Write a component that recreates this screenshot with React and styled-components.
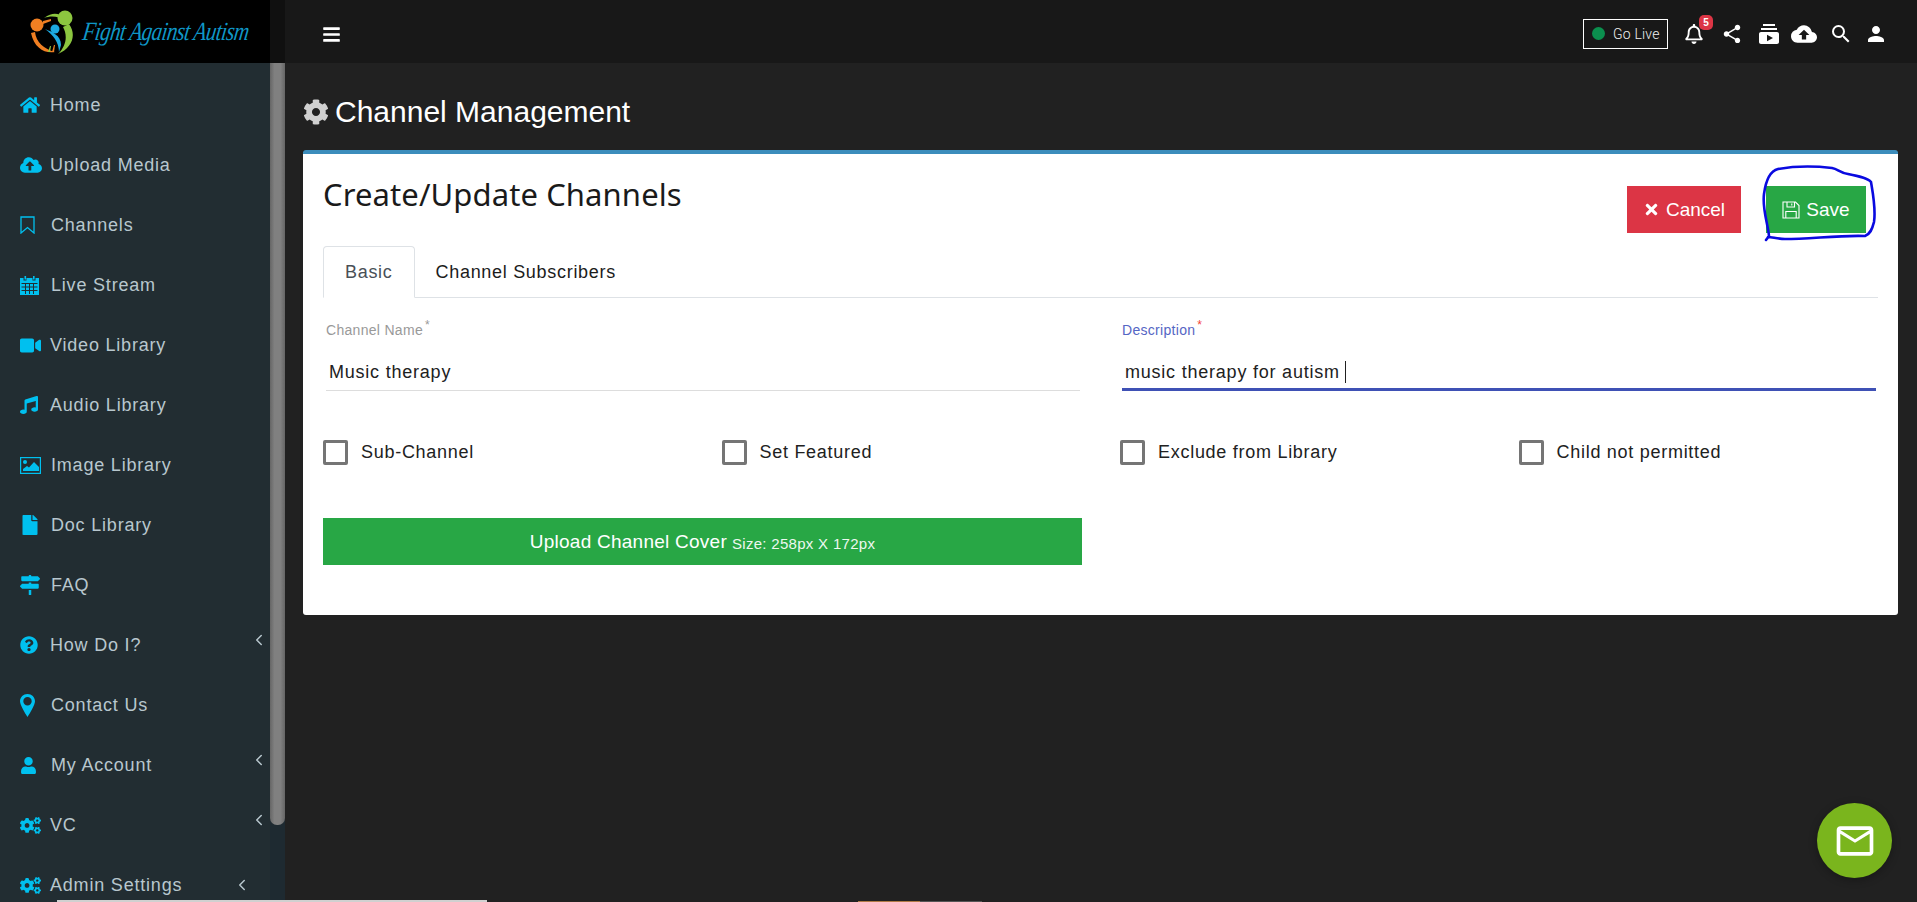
import React from "react";
import styled, { createGlobalStyle } from "styled-components";
import {
  FaHome,
  FaCloudUploadAlt,
  FaVideo,
  FaMusic,
  FaFile,
  FaMapSigns,
  FaQuestionCircle,
  FaUser,
  FaCogs,
  FaCog,
  FaTimes,
  FaBars,
  FaRegBell,
} from "react-icons/fa";
import { FiChevronLeft } from "react-icons/fi";
import {
  MdShare,
  MdSubscriptions,
  MdCloudUpload,
  MdSearch,
  MdPerson,
  MdMailOutline,
} from "react-icons/md";

const GlobalStyle = createGlobalStyle`
  html, body {
    margin: 0;
    padding: 0;
    height: 100%;
    overflow: hidden;
    background: #212121;
    font-family: "Liberation Sans", Arial, sans-serif;
  }
  * { box-sizing: border-box; }
`;

const Page = styled.div`
  position: relative;
  width: 1917px;
  height: 902px;
  display: flex;
  overflow: hidden;
  background: #212121;
`;

const Side = styled.aside`
  width: 285px;
  height: 902px;
  flex-shrink: 0;
  display: flex;
  flex-direction: column;
`;
const LogoBar = styled.div`
  height: 63px;
  flex-shrink: 0;
  display: flex;
  align-items: center;
  padding-left: 30px;
  gap: 7px;
  background: linear-gradient(to right, #000 270px, #101010 270px);
`;
const LogoText = styled.span`
  font-family: "Liberation Serif", serif;
  font-style: italic;
  font-size: 21px;
  color: #0f97c7;
  white-space: nowrap;
  letter-spacing: -0.6px;
  transform: skewX(-8deg) scaleY(1.25);
`;
const SideBody = styled.div`
  flex: 1;
  display: flex;
  min-height: 0;
`;
const Menu = styled.nav`
  width: 270px;
  flex-shrink: 0;
  background: #222d32;
  padding-top: 12px;
  overflow: hidden;
`;
const MenuRow = styled.div`
  height: 60px;
  display: flex;
  align-items: center;
  padding-left: 20px;
  color: #b8c7ce;
  font-size: 18px;
  letter-spacing: 0.8px;
  white-space: nowrap;
`;
const MenuIcon = styled.span`
  width: ${(p) => p.$w}px;
  flex-shrink: 0;
  display: flex;
  align-items: center;
  color: #00c0ef;
  font-size: ${(p) => p.$size || 20}px;
`;
const MenuArrow = styled.span`
  margin-left: ${(p) => (p.$inner ? "51px" : "auto")};
  padding-right: ${(p) => (p.$inner ? "0" : "2px")};
  padding-bottom: ${(p) => (p.$inner ? "0" : "10px")};
  display: flex;
  color: #b8c7ce;
  font-size: 18px;
`;
const Track = styled.div`
  width: 15px;
  flex-shrink: 0;
  background: #1e2a31;
`;
const Thumb = styled.div`
  height: 762px;
  border-radius: 0 0 7px 7px;
  background: linear-gradient(to right, #666 0, #808080 30%, #808080 70%, #666 100%);
`;
const HScroll = styled.div`
  position: absolute;
  left: 57px;
  bottom: 0;
  width: 430px;
  height: 2px;
  background: #d0d0d0;
`;
const TaskMark = styled.div`
  position: absolute;
  left: ${(p) => p.$x}px;
  bottom: 0;
  width: 62px;
  height: 1px;
  background: ${(p) => p.$bg};
`;

const Main = styled.main`
  flex: 1;
  min-width: 0;
  display: flex;
  flex-direction: column;
`;
const TopBar = styled.header`
  height: 63px;
  flex-shrink: 0;
  display: flex;
  align-items: center;
  padding: 0 29px 0 37px;
  background: #181818;
  color: #fff;
`;
const Burger = styled.span`
  display: flex;
  font-size: 19px;
  margin-top: 5px;
`;
const TopRight = styled.div`
  margin-left: auto;
  display: flex;
  align-items: center;
  margin-top: 4px;
`;
const GoLive = styled.div`
  width: 85px;
  height: 30px;
  display: flex;
  align-items: center;
  gap: 8px;
  padding-left: 8px;
  border: 1px solid #fff;
  font-family: "Roboto", "Liberation Sans", sans-serif;
  font-size: 14px;
  font-weight: 300;
  letter-spacing: 0.2px;
  color: #f0f0f0;
  margin-right: 16px;
  white-space: nowrap;
`;
const Dot = styled.i`
  width: 13px;
  height: 13px;
  flex-shrink: 0;
  border-radius: 50%;
  background: #0b8f4e;
`;
const TopIcon = styled.span`
  position: relative;
  display: flex;
  font-size: ${(p) => p.$size || 24}px;
  margin-left: ${(p) => p.$gap || 0}px;
`;
const Badge = styled.b`
  position: absolute;
  top: -9px;
  right: -9px;
  width: 14px;
  height: 15px;
  border-radius: 5px;
  background: #dc3545;
  color: #fff;
  font-size: 10px;
  line-height: 15px;
  text-align: center;
`;

const Content = styled.div`
  padding: 0 19px 0 18px;
`;
const PageTitle = styled.h1`
  margin: 0;
  height: 87px;
  display: flex;
  align-items: center;
  gap: 6px;
  color: #fff;
  font-size: 30px;
  font-weight: 400;
  padding-top: 10px;
  svg {
    color: #d0d0d0;
    font-size: 26px;
  }
`;
const Card = styled.section`
  position: relative;
  height: 465px;
  background: #fff;
  border-top: 4px solid #3c8dbc;
  border-radius: 3px;
  padding: 0 20px;
`;
const CardHead = styled.div`
  display: flex;
  justify-content: space-between;
`;
const CardTitle = styled.h2`
  margin: 0;
  padding-top: 19px;
  font-family: "Noto Sans", sans-serif;
  font-size: 31px;
  line-height: 42px;
  font-weight: 400;
  letter-spacing: 0.1px;
  color: #1a1a1a;
`;
const Actions = styled.div`
  display: flex;
  gap: 25px;
  padding: 32px 12px 0 0;
`;
const Btn = styled.button`
  width: ${(p) => p.$w}px;
  height: 47px;
  display: flex;
  align-items: center;
  justify-content: center;
  gap: 6px;
  border: 0;
  padding: 0;
  background: ${(p) => p.$bg};
  color: #fff;
  font-family: inherit;
  font-size: 19px;
`;
const Tabs = styled.div`
  display: flex;
  height: 52px;
  margin-top: 13px;
  border-bottom: 1px solid #dee2e6;
`;
const Tab = styled.div`
  height: 52px;
  padding: 0 21px;
  margin-left: ${(p) => (p.$active ? "0" : "-1px")};
  display: flex;
  align-items: center;
  font-size: 18px;
  letter-spacing: 0.7px;
  color: ${(p) => (p.$active ? "#495057" : "#1c1c1c")};
  border: 1px solid ${(p) => (p.$active ? "#dee2e6" : "transparent")};
  border-bottom: ${(p) => (p.$active ? "1px solid #fff" : "0")};
  border-radius: 4px 4px 0 0;
`;
const Fields = styled.div`
  display: grid;
  grid-template-columns: 754px 754px;
  column-gap: 42px;
  padding: 23px 0 0 3px;
`;
const Field = styled.div`
  display: flex;
  flex-direction: column;
`;
const Label = styled.label`
  font-size: 14px;
  line-height: 18px;
  letter-spacing: 0.3px;
  color: ${(p) => (p.$focus ? "#5566c4" : "#999")};
  sup {
    font-size: 12px;
    line-height: 0;
    color: ${(p) => (p.$focus ? "#f44336" : "#999")};
    margin-left: 2px;
  }
`;
const ValueLine = styled.div`
  height: 52px;
  display: flex;
  align-items: center;
  padding: ${(p) => (p.$focus ? "17px" : "15px")} 3px 0;
  font-size: 18px;
  letter-spacing: 0.78px;
  color: #212121;
  border-bottom: ${(p) => (p.$focus ? "3px solid #3f51b5" : "1px solid #ddd")};
`;
const Caret = styled.i`
  width: 1px;
  height: 22px;
  margin-left: 5px;
  background: #212121;
`;
const Checks = styled.div`
  display: grid;
  grid-template-columns: repeat(4, 398.5px);
  padding-top: 49px;
`;
const CheckItem = styled.label`
  display: flex;
  align-items: center;
  gap: 13px;
  font-size: 18px;
  letter-spacing: 0.72px;
  color: #212121;
`;
const Box = styled.i`
  width: 25px;
  height: 25px;
  border: 3px solid #757575;
  border-radius: 2px;
`;
const UploadBar = styled.div`
  width: 759px;
  height: 47px;
  margin-top: 53px;
  display: flex;
  align-items: center;
  justify-content: center;
  gap: 5px;
  background: #28a745;
  color: #fff;
  font-size: 19px;
  letter-spacing: 0.25px;
  small {
    font-size: 15px;
    letter-spacing: 0.3px;
    padding-top: 3px;
    opacity: 0.92;
  }
`;
const Scribble = styled.svg`
  position: absolute;
  left: 1760px;
  top: 164px;
  pointer-events: none;
`;
const Fab = styled.div`
  position: absolute;
  left: 1817px;
  top: 803px;
  width: 75px;
  height: 75px;
  border-radius: 50%;
  display: flex;
  align-items: center;
  justify-content: center;
  background: #7ab51d;
  color: #fff;
  font-size: 44px;
  box-shadow: 0 2px 8px rgba(0, 0, 0, 0.3);
`;

const BookmarkIcon = () => (
  <svg width="15" height="18" viewBox="0 0 15 18" fill="none" stroke="currentColor" strokeWidth="1.3">
    <path d="M1 1h13v16l-6.5-5.5L1 17z" />
  </svg>
);
const CalendarIcon = () => (
  <svg width="19" height="20" viewBox="0 0 19 20" fill="currentColor">
    <path d="M0 3h3.5v2.5h3V3h6v2.5h3V3H19v17H0zM4.5 1h1.6v3.5H4.5zM13 1h1.6v3.5H13z" />
    <path
      d="M1.5 8.5h16M1.5 12h16M1.5 15.5h16M5.5 8v11M9.5 8v11M13.5 8v11"
      stroke="#222d32"
      strokeWidth="1"
      fill="none"
    />
  </svg>
);
const ImageIcon = () => (
  <svg width="21" height="17" viewBox="0 0 21 17" fill="none">
    <rect x="0.6" y="0.6" width="19.8" height="15.8" stroke="currentColor" strokeWidth="1.2" />
    <circle cx="5" cy="5" r="2" fill="currentColor" />
    <path d="M3 14v-2l4-3 2 1.5L14 5l5 5v4z" fill="currentColor" />
  </svg>
);
const PinIcon = () => (
  <svg width="15" height="23" viewBox="0 0 15 23" fill="currentColor">
    <path
      fillRule="evenodd"
      d="M7.5 0C3.3 0 0 3.2 0 7.3c0 3.8 5 11.8 7.5 15.7C10 19.1 15 11.1 15 7.3 15 3.2 11.7 0 7.5 0zm0 3a4.2 4.2 0 1 1 0 8.4 4.2 4.2 0 0 1 0-8.4z"
    />
  </svg>
);
const FloppyIcon = () => (
  <svg width="18" height="18" viewBox="0 0 18 18" fill="none" stroke="currentColor" strokeWidth="1.1">
    <path d="M1 1h12.5L17 4.5V17H1z" />
    <path d="M5 1v5h7.5V1M9.8 2.5v2M3.8 17v-6.5h10.4V17" />
  </svg>
);

const menuItems = [
  { label: "Home", icon: <FaHome />, w: 30 },
  { label: "Upload Media", icon: <FaCloudUploadAlt />, w: 30, size: 22 },
  { label: "Channels", icon: <BookmarkIcon />, w: 31 },
  { label: "Live Stream", icon: <CalendarIcon />, w: 31 },
  { label: "Video Library", icon: <FaVideo />, w: 30, size: 21 },
  { label: "Audio Library", icon: <FaMusic />, w: 30, size: 18 },
  { label: "Image Library", icon: <ImageIcon />, w: 31 },
  { label: "Doc Library", icon: <FaFile />, w: 31 },
  { label: "FAQ", icon: <FaMapSigns />, w: 31 },
  { label: "How Do I?", icon: <FaQuestionCircle />, w: 30, size: 18, arrow: true },
  { label: "Contact Us", icon: <PinIcon />, w: 31 },
  { label: "My Account", icon: <FaUser />, w: 31, size: 17, arrow: true },
  { label: "VC", icon: <FaCogs />, w: 30, size: 21, arrow: true },
  { label: "Admin Settings", icon: <FaCogs />, w: 30, size: 21, inner: true },
];

const checks = ["Sub-Channel", "Set Featured", "Exclude from Library", "Child not permitted"];

const Logo = () => (
  <svg width="46" height="46" viewBox="0 0 46 46">
    <circle cx="35" cy="9" r="7.5" fill="#8cc63f" />
    <path d="M14 9 C21 4 26 4 30 6 L29 8.5 C24 7 19 7 14 9Z" fill="#8cc63f" />
    <path d="M39 15 C47 26 42 39 28 45 C36 37 38 27 33 18Z" fill="#8cc63f" />
    <circle cx="7" cy="16" r="6.5" fill="#f07f22" />
    <path d="M13 12 L21 10 L21 12 L13 15Z" fill="#f07f22" />
    <path d="M5 23 C6 33 14 40 25 43 C15 45 4 39 1 24Z" fill="#f07f22" />
    <circle cx="25" cy="20" r="4.5" fill="#1ca9e0" />
    <path d="M15 20 C22 23 31 26 31 36 L29 43 C29 33 23 26 15 20Z" fill="#1ca9e0" />
    <path d="M18 43 L20 37 L21 37 L20 43Z" fill="#8cc63f" />
    <path d="M22 43 L24 36 L25 36 L24 43Z" fill="#f07f22" />
  </svg>
);

const App = () => (
  <Page>
    <GlobalStyle />
    <Side>
      <LogoBar>
        <Logo />
        <LogoText>Fight Against Autism</LogoText>
      </LogoBar>
      <SideBody>
        <Menu>
          {menuItems.map((item) => (
            <MenuRow key={item.label}>
              <MenuIcon $w={item.w} $size={item.size}>
                {item.icon}
              </MenuIcon>
              {item.label}
              {item.arrow && (
                <MenuArrow>
                  <FiChevronLeft />
                </MenuArrow>
              )}
              {item.inner && (
                <MenuArrow $inner>
                  <FiChevronLeft />
                </MenuArrow>
              )}
            </MenuRow>
          ))}
        </Menu>
        <Track>
          <Thumb />
        </Track>
      </SideBody>
    </Side>

    <Main>
      <TopBar>
        <Burger>
          <FaBars />
        </Burger>
        <TopRight>
          <GoLive>
            <Dot />
            Go Live
          </GoLive>
          <TopIcon $size={20}>
            <FaRegBell />
            <Badge>5</Badge>
          </TopIcon>
          <TopIcon $gap={17} $size={22}>
            <MdShare />
          </TopIcon>
          <TopIcon $gap={14} $size={24}>
            <MdSubscriptions />
          </TopIcon>
          <TopIcon $gap={10} $size={26}>
            <MdCloudUpload />
          </TopIcon>
          <TopIcon $gap={12} $size={24}>
            <MdSearch />
          </TopIcon>
          <TopIcon $gap={11} $size={24}>
            <MdPerson />
          </TopIcon>
        </TopRight>
      </TopBar>

      <Content>
        <PageTitle>
          <FaCog />
          Channel Management
        </PageTitle>
        <Card>
          <CardHead>
            <CardTitle>Create/Update Channels</CardTitle>
            <Actions>
              <Btn $w={114} $bg="#dc3545">
                <FaTimes size={17} />
                Cancel
              </Btn>
              <Btn $w={100} $bg="#28a745">
                <FloppyIcon />
                Save
              </Btn>
            </Actions>
          </CardHead>
          <Tabs>
            <Tab $active>Basic</Tab>
            <Tab>Channel Subscribers</Tab>
          </Tabs>
          <Fields>
            <Field>
              <Label>
                Channel Name<sup>*</sup>
              </Label>
              <ValueLine>Music therapy</ValueLine>
            </Field>
            <Field>
              <Label $focus>
                Description<sup>*</sup>
              </Label>
              <ValueLine $focus>
                music therapy for autism
                <Caret />
              </ValueLine>
            </Field>
          </Fields>
          <Checks>
            {checks.map((c) => (
              <CheckItem key={c}>
                <Box />
                {c}
              </CheckItem>
            ))}
          </Checks>
          <UploadBar>
            Upload Channel Cover <small>Size: 258px X 172px</small>
          </UploadBar>
        </Card>
      </Content>
    </Main>

    <Scribble width="120" height="80" viewBox="0 0 120 80" fill="none">
      <path
        d="M6 76 L9 72 C8 60 2 45 4 30 C6 15 10 7 18 5 C35 2 55 2 72 4 C78 5 80 9 88 10 C98 12 108 14 111 18 C113 30 116 45 114 58 C112 66 110 70 105 72 C80 71 50 75 25 75 C18 75 12 73 8 73"
        stroke="#0a0ae0"
        strokeWidth="2.6"
        strokeLinecap="round"
      />
    </Scribble>
    <Fab>
      <MdMailOutline />
    </Fab>
    <HScroll />
    <TaskMark $x={858} $bg="#b07a45" />
    <TaskMark $x={920} $bg="#555" />
  </Page>
);

export default App;
